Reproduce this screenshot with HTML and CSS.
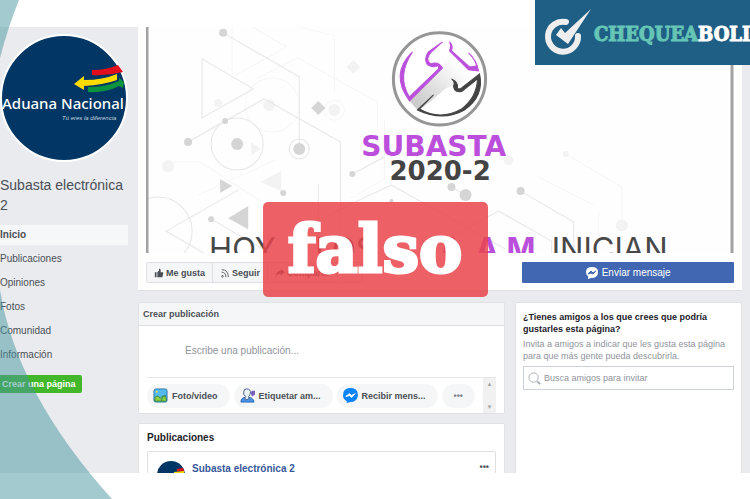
FILE: index.html
```html
<!DOCTYPE html>
<html lang="es">
<head>
    <meta charset="UTF-8">
    <meta name="viewport" content="width=device-width, initial-scale=1.0">
    <title>Subasta electrónica 2</title>
    <link rel="stylesheet" href="styles.css">
</head>

<body>

    <div class="page">
        <aside class="sidebar">
            <svg class="profile" viewBox="0 0 128 128" role="img" aria-label="Aduana Nacional">
                <circle cx="64" cy="64" r="63" fill="#023665" stroke="#fff" stroke-width="2"/>
                <path d="M92 36Q107 36 118 31L123 38Q108 42 92 41Z" fill="#e30d1c"/>
                <path d="M74 50L84 42V46Q103 46 117 40V46Q103 51 84 52V56Z" fill="#ffdc00"/>
                <path d="M88 53Q106 53 119 47V44L124 48L123 54L119 52Q106 59 88 58Z" fill="#0b943f"/>
                <text class="profile-name" x="2" y="75">Aduana Nacional</text>
                <text class="profile-motto" x="62" y="86">Tú eres la diferencia</text>
            </svg>
            <h1>Subasta electrónica 2</h1>
            <nav>
                <a class="active" href="#">Inicio</a>
                <a href="#">Publicaciones</a>
                <a href="#">Opiniones</a>
                <a href="#">Fotos</a>
                <a href="#">Comunidad</a>
                <a href="#">Información</a>
            </nav>
            <button type="button" class="create-page">Crear una página</button>
        </aside>

        <main>
            <section class="cover">
                <svg class="banner" viewBox="146 27 587 226" preserveAspectRatio="xMidYMid slice">
                    <defs>
                        <linearGradient id="shade" x1="0" y1="1" x2="1" y2="0">
                            <stop offset="0.15" stop-color="#ccc"/>
                            <stop offset="0.75" stop-color="#fff"/>
                        </linearGradient>
                    </defs>
                    <rect x="146" y="27" width="587" height="226" fill="#fefefe"/>
                    <!-- faint shapes -->
                    <g fill="none" stroke="#f6f6f6">
                        <path d="M232 27V75M252 27L286 47L234 76M298 27L334 36V92M256 79L297 58L377 102V150"/>
                        <circle cx="272" cy="105" r="27"/>
                        <circle cx="334" cy="110" r="10"/>
                        <path d="M565 154L621 187V223M536 176L593 205M598 211V237M350 198L384 179V120"/>
                        <path d="M170 162L200 162L275 210M198 195L275 160"/>
                    </g>
                    <g fill="#f3f3f3">
                        <path d="M353 60L360 67L353 74L346 67ZM281 171V191L260 182ZM251 142L261 149L251 155Z"/>
                        <circle cx="334" cy="110" r="6"/>
                        <circle cx="269" cy="105" r="6"/>
                        <circle cx="218" cy="103" r="4"/>
                        <circle cx="168" cy="166" r="6"/>
                        <circle cx="621" cy="225" r="6"/>
                        <circle cx="565" cy="154" r="3"/>
                        <circle cx="508" cy="160" r="5"/>
                    </g>
                    <!-- lines -->
                    <g fill="none" stroke="#e6e6e6">
                        <path d="M223 33L299 77V148M202 59L253 89L202 118ZM188 142L264 99L340 142V240M318 184V253"/>
                        <circle cx="237" cy="144" r="26"/>
                        <circle cx="299" cy="149" r="10"/>
                        <circle cx="158" cy="231" r="34"/>
                        <path d="M238 190L166 231L204 253M211 219L270 253M352 174L384 157M350 204L391 185L505 249M451 187L465 195M520 191L573 222V253M440 242L498 211L551 241V253M350 204L300 231"/>
                    </g>
                    <g fill="#d5d5d5">
                        <circle cx="223" cy="33" r="4"/>
                        <circle cx="188" cy="142" r="4"/>
                        <circle cx="225" cy="121" r="3"/>
                        <circle cx="237" cy="144" r="6"/>
                        <circle cx="299" cy="149" r="6"/>
                        <circle cx="352" cy="174" r="3"/>
                        <circle cx="283" cy="193" r="3"/>
                        <circle cx="211" cy="219" r="3"/>
                        <circle cx="391" cy="201" r="2"/>
                        <circle cx="451" cy="187" r="4"/>
                        <circle cx="465" cy="195" r="6"/>
                        <circle cx="520" cy="191" r="4"/>
                        <path d="M318 101L325 108L318 115L311 108ZM220 179L232 186L220 193ZM248 206V229L228 218Z"/>
                    </g>
                    <!-- auction emblem -->
                    <circle cx="439" cy="79" r="46" fill="#fff" stroke="#969696" stroke-width="3"/>
                    <path d="M408 100L441 68L449 52L476 72L462 82L446 88L418 111Z" fill="url(#shade)"/>
                    <path d="M412 52Q389 74 409 101L442 68Q438 61 430 64Q424 59 431 52L442 42L428 52Q423 59 427 65Q432 68 438 66L438 69L409 97Q396 76 412 52Z" fill="#bb4fdc" stroke="#bb4fdc"/>
                    <path d="M449 42Q453 46 451 51L469 67L476 66Q475 60 468 53Q476 60 478 71L468 70L449 51Q451 46 449 42Z" fill="#bb4fdc" stroke="#bb4fdc"/>
                    <path d="M433 95L419 109Q440 121 461 109Q476 98 477 79L462 91Q454 94 453 86Q455 82 451 79Q458 82 457 88Q458 90 461 88L479 74Q484 96 464 110Q442 122 417 110Z" fill="#444" stroke="#444"/>
                    <text class="banner-title" x="361" y="156">SUBASTA</text>
                    <text class="banner-year" x="389" y="180">2020-2</text>
                    <g class="banner-line">
                        <text x="209" y="260">HOY</text>
                        <text x="315" y="260">LOS</text>
                        <text class="purple" x="439" y="260">A</text>
                        <text class="purple" x="475" y="260">A</text>
                        <text class="purple" x="506" y="260">M</text>
                        <text x="551" y="260">INICIAN</text>
                    </g>
                    <path d="M147 27V253M731 27V253" stroke="#a2a2a2" stroke-width="3"/>
                </svg>
                <div class="actions">
                    <div class="button-group">
                        <button type="button">
                            <svg class="icon" viewBox="0 0 12 12" fill="#4b4f56"><path d="M1 5H3V11H1ZM4 5L6 3V1Q8 0 8 3L8 5H11V7L10 11H4Z"/></svg>
                            Me gusta
                        </button>
                        <button type="button">
                            <svg class="icon" viewBox="0 0 12 12" fill="none" stroke="#4b4f56"><path d="M2 2Q10 2 10 11M2 5Q7 5 7 11"/><circle cx="3" cy="10" r="1"/></svg>
                            Seguir
                        </button>
                        <button type="button">
                            <svg class="icon" viewBox="0 0 12 12" fill="#4b4f56"><path d="M7 1L12 5L7 9V7Q3 6 1 11Q1 4 7 3Z"/></svg>
                            Compartir
                        </button>
                        <button type="button" aria-label="Más">•••</button>
                    </div>
                    <button type="button" class="send">
                        <svg class="icon" viewBox="0 0 12 12"><path d="M6 0Q12 0 12 5Q12 11 5 11L2 12V9Q0 8 0 5Q0 0 6 0Z" fill="#fff"/><path d="M2 7L5 4L7 6L10 4L7 7L5 6Z" fill="#4267b2" stroke="#4267b2"/></svg>
                        Enviar mensaje
                    </button>
                </div>
            </section>

            <div class="columns">
                <div class="feed">
                    <section class="card composer">
                        <h2>Crear publicación</h2>
                        <input type="text" aria-label="Escribe una publicación" placeholder="Escribe una publicación...">
                        <div class="tools">
                            <button type="button">
                                <svg class="tool-icon" viewBox="0 0 16 16"><rect x="1" y="1" width="14" height="14" rx="2" fill="#54b9ec" stroke="#3278aa"/><path d="M2 10Q5 7 8 11Q11 6 14 10V14H2Z" fill="#8ed13f" stroke="#388743"/><circle cx="4" cy="4" r="1" fill="#ffdf50"/><path d="M9 14Q9 9 14 8" stroke="#307b52" fill="none"/></svg>
                                Foto/video
                            </button>
                            <button type="button">
                                <svg class="tool-icon" viewBox="0 0 16 16"><path d="M1 15Q1 10 6 10H9Q14 10 15 15Z" fill="#4a91ec" stroke="#2965ad"/><path d="M7 1Q12 1 11 6Q10 9 9 9L10 11Q7 14 5 11L6 9Q3 7 4 4Q4 1 7 1Z" fill="#edf3fa" stroke="#3e577e"/><path d="M11 5L13 3H16V7L13 9Z" fill="#7860ba"/></svg>
                                Etiquetar am...
                            </button>
                            <button type="button">
                                <svg class="tool-icon" viewBox="0 0 16 16"><path d="M8 0Q16 0 16 8Q15 15 8 15L4 16V14Q0 12 0 8Q0 0 8 0Z" fill="#0c84fb"/><path d="M3 9L7 6L9 8L13 6L9 10L7 8Z" fill="#fff" stroke="#fff"/></svg>
                                Recibir mens...
                            </button>
                            <button type="button" class="more" aria-label="Más opciones">•••</button>
                            <div class="scroller"><span>▲</span><span>▼</span></div>
                        </div>
                    </section>

                    <section class="card posts">
                        <h2>Publicaciones</h2>
                        <article class="post">
                            <svg class="avatar" viewBox="0 0 28 28"><circle cx="14" cy="14" r="14" fill="#023665"/><path d="M20 8L26 7L27 10L20 10Z" fill="#e30d1c"/><path d="M17 11L27 10V12H17Z" fill="#ffdc00"/></svg>
                            <a href="#">Subasta electrónica 2</a>
                            <button type="button" class="post-menu" aria-label="Opciones">•••</button>
                        </article>
                    </section>
                </div>

                <section class="card invite">
                    <h2>¿Tienes amigos a los que crees que podría gustarles esta página?</h2>
                    <p>Invita a amigos a indicar que les gusta esta página para que más gente pueda descubrirla.</p>
                    <label class="search">
                        <svg class="search-icon" viewBox="0 0 14 14" fill="none" stroke="#a5aab4"><circle cx="6" cy="6" r="5"/><path d="M10 10L13 13" stroke-width="2"/></svg>
                        <input type="text" aria-label="Busca amigos para invitar" placeholder="Busca amigos para invitar">
                    </label>
                </section>
            </div>
        </main>
    </div>

    <svg class="swoosh" viewBox="0 0 112 499">
        <path d="M0 0H19Q8 27 0 58ZM0 290Q17 394 112 499H0Z" fill="#47959f" fill-opacity="0.5"/>
    </svg>

    <div class="brand">
        <svg class="brand-icon" viewBox="0 0 48 48">
            <path d="M23 13A15 15 0 1 0 35 27" fill="none" stroke="#eee" stroke-width="6" stroke-linecap="round"/>
            <path d="M13 26L18 19L22 24L48 0L25 35Z" fill="#eee"/>
        </svg>
        <span class="brand-name"><span>CHEQUEA</span>BOLIVIA</span>
    </div>

    <div class="stamp">falso</div>

</body>
</html>
```
FILE: styles.css
```css
* {
    box-sizing: border-box;
}

body {
    margin: 0;
    padding: 27px 0 26px;
    height: 100vh;
    position: relative;
    overflow: hidden;
    background-color: #fff;
    color: #4b4f56;
    font-family: "Liberation Sans", Arial, sans-serif;
    font-size: 9px;
}

h1, h2, p {
    margin: 0;
}

a {
    color: inherit;
    text-decoration: none;
}

button, input {
    font-family: inherit;
    font-size: 9px;
    border: none;
    padding: 0;
}

button {
    color: #4b4f56;
    font-weight: bold;
    white-space: nowrap;
    cursor: pointer;
}

.page {
    display: grid;
    grid-template-columns: 138px 1fr;
    height: 100%;
    padding-right: 8px;
    overflow: hidden;
    background-color: #e9ebee;
}

/* sidebar */
.sidebar {
    padding-top: 7px;
}

.profile {
    display: block;
    width: 128px;
    height: 128px;
}

.profile-name {
    fill: #fff;
    font-family: "Noto Sans", sans-serif;
    font-size: 15px;
    font-weight: 500;
}

.profile-motto {
    fill: #c5d2df;
    font-size: 6px;
    font-style: italic;
}

h1 {
    padding: 13px 10px 0 0;
    font-size: 14px;
    font-weight: normal;
    line-height: 20px;
}

nav {
    display: grid;
    gap: 4px;
    padding: 10px 10px 0 0;
    font-size: 10px;
    line-height: 20px;
}

nav a {
    display: block;
}

nav .active {
    background-color: #f6f7f9;
    font-weight: bold;
}

.create-page {
    height: 18px;
    margin-top: 10px;
    padding: 0 6px 0 2px;
    border-radius: 0 2px 2px 0;
    background-color: #42b72a;
    color: #fff;
}

/* cover */
.cover {
    height: 264px;
    padding: 0 8px;
    background-color: #fff;
    border-bottom: 1px solid #dddfe2;
}

.banner {
    display: block;
    width: 100%;
    height: 226px;
}

.banner-title {
    fill: #bb4fdc;
    font-family: "DejaVu Sans", sans-serif;
    font-size: 28px;
    font-weight: bold;
}

.banner-year {
    fill: #444;
    font-family: "DejaVu Sans", sans-serif;
    font-size: 26px;
    font-weight: bold;
}

.banner-line {
    fill: #484848;
    font-family: Inter, sans-serif;
    font-size: 31px;
}

.purple {
    fill: #bb4fdc;
    font-weight: bold;
}

.actions {
    display: flex;
    justify-content: space-between;
    padding-top: 9px;
}

.button-group {
    display: flex;
    border: 1px solid #dddfe2;
    border-radius: 2px;
}

.button-group button {
    display: flex;
    align-items: center;
    gap: 2px;
    height: 19px;
    padding: 0 7px;
    background-color: #f5f6f7;
}

.button-group button + button {
    border-left: 1px solid #dddfe2;
}

.icon {
    width: 10px;
    height: 10px;
}

.send {
    display: flex;
    align-items: center;
    justify-content: center;
    gap: 4px;
    width: 36%;
    height: 21px;
    border-radius: 1px;
    background-color: #4267b2;
    color: #fff;
    font-size: 10px;
    font-weight: normal;
}

.send .icon {
    width: 12px;
    height: 12px;
}

/* columns */
.columns {
    display: grid;
    grid-template-columns: 1fr 227px;
    gap: 10px;
    padding-top: 11px;
}

.card {
    background-color: #fff;
    border: 1px solid #dfe1e5;
    border-radius: 2px;
}

.feed {
    display: grid;
    gap: 9px;
}

.composer h2 {
    padding: 0 4px;
    border-bottom: 1px solid #dddfe2;
    background-color: #f5f6f7;
    font-size: 9px;
    line-height: 22px;
}

.composer input {
    display: block;
    width: 100%;
    height: 51px;
    padding: 0 46px 3px;
    font-size: 10px;
}

input::placeholder {
    color: #90949c;
    opacity: 1;
}

.tools {
    display: flex;
    align-items: center;
    gap: 4px;
    height: 36px;
    margin: 0 8px;
    border-top: 1px solid #e5e6e9;
}

.tools button {
    display: flex;
    align-items: center;
    gap: 4px;
    height: 24px;
    padding: 0 12px 0 6px;
    border-radius: 12px;
    background-color: #f5f6f7;
}

.tools .more {
    padding: 0 12px;
    color: #7f8490;
}

.tool-icon {
    width: 15px;
    height: 15px;
}

.scroller {
    display: flex;
    flex-direction: column;
    justify-content: space-between;
    align-self: stretch;
    align-items: center;
    width: 13px;
    margin-left: auto;
    padding: 3px 0;
    background-color: #f1f1f1;
    color: #a3a3a3;
    font-size: 6px;
}

.posts {
    padding: 0 8px;
}

.posts h2 {
    color: #1d2129;
    font-size: 10px;
    line-height: 27px;
}

.post {
    display: flex;
    gap: 7px;
    height: 90px;
    padding: 9px 6px 8px 9px;
    border: 1px solid #dddfe2;
    border-radius: 2px;
}

.post a {
    color: #365899;
    font-size: 10px;
    font-weight: bold;
    line-height: 16px;
}

.avatar {
    width: 28px;
    height: 28px;
}

.post-menu {
    height: 12px;
    margin-left: auto;
    background: none;
}

.invite {
    padding: 8px 7px;
}

.invite h2 {
    color: #1d2129;
    font-size: 9px;
    line-height: 12px;
}

.invite p {
    padding: 3px 0 4px;
    color: #90949c;
    line-height: 12px;
}

.search {
    display: flex;
    align-items: center;
    gap: 3px;
    height: 24px;
    padding: 0 4px;
    border: 1px solid #ccd0dc;
}

.search-icon {
    width: 13px;
    height: 13px;
}

.search input {
    flex: 1;
    min-width: 0;
    outline: none;
}

/* overlays */
.swoosh {
    position: absolute;
    top: 0;
    left: 0;
    height: 100%;
    pointer-events: none;
}

.brand {
    position: absolute;
    top: 0;
    right: 0;
    display: flex;
    align-items: center;
    gap: 3px;
    width: 215px;
    height: 65px;
    padding-left: 8px;
    overflow: hidden;
    background-color: #1f5f86;
}

.brand-icon {
    flex: none;
    width: 48px;
    height: 48px;
}

.brand-name {
    color: #fff;
    font-family: "DejaVu Serif Condensed", "DejaVu Serif", serif;
    font-size: 20px;
    font-weight: bold;
    line-height: 24px;
    padding-top: 3px;
    -webkit-text-stroke: 1px #fff;
}

.brand-name span {
    color: #66c5b5;
    -webkit-text-stroke: 1px #66c5b5;
}

.stamp {
    position: absolute;
    top: 202px;
    left: 35%;
    width: 30%;
    border-radius: 5px;
    background-color: rgba(233, 68, 75, 0.85);
    color: #fff;
    font-family: "DejaVu Serif", serif;
    font-size: 65px;
    font-weight: bold;
    line-height: 95px;
    text-align: center;
    -webkit-text-stroke: 3px #fff;
}
```
